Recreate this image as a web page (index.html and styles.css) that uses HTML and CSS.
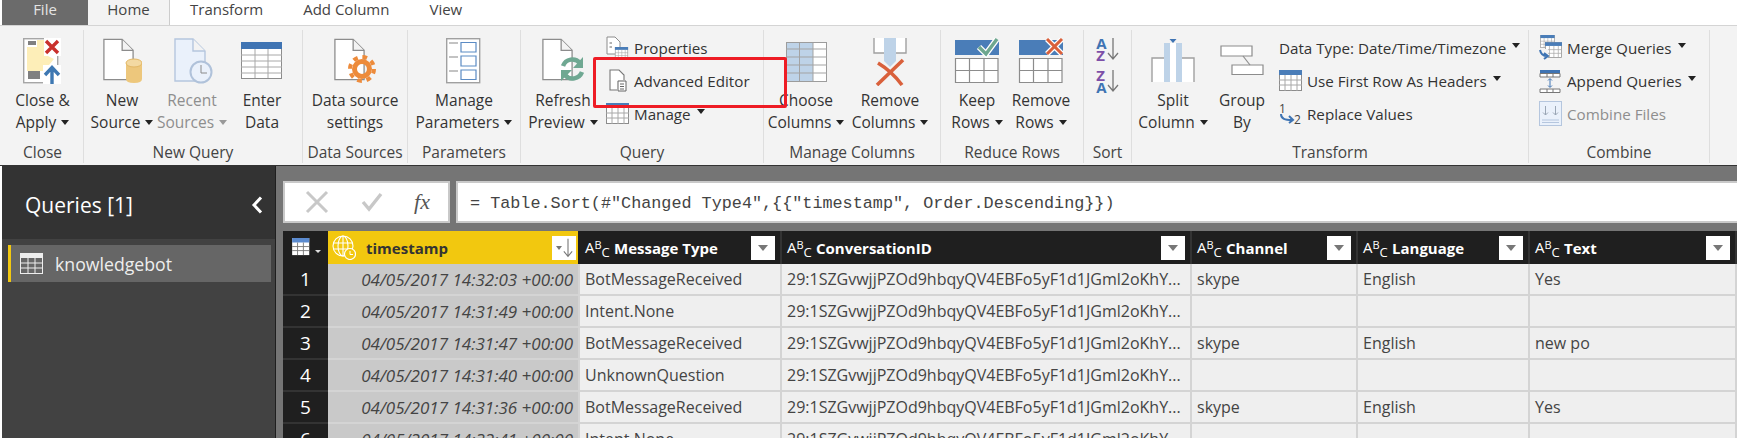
FILE: index.html
```html
<!DOCTYPE html>
<html>
<head>
  <title>Power Query Editor</title>
  <link rel="stylesheet" href="styles.css">
</head>
<body>

  <svg class="defs" width="0" height="0">
    <symbol id="page" viewBox="0 0 34 46">
      <path d="M1 1H21L33 13V45H1Z" fill="#fff" stroke="#8c8c8c" stroke-width="1.4"/>
      <path d="M21 1V13H33" fill="#f3f3f3" stroke="#8c8c8c" stroke-width="1.4"/>
    </symbol>
    <symbol id="minitable" viewBox="0 0 23 21">
      <rect x=".5" y=".5" width="22" height="20" fill="#fff" stroke="#8c8c8c"/>
      <rect x="0" y="0" width="23" height="5" fill="#4a7db8"/>
      <path d="M0 10H23M0 15H23M6 5V21M12 5V21M18 5V21" stroke="#a8a8a8"/>
    </symbol>
    <symbol id="downarrow" viewBox="0 0 12 24">
      <path d="M6 1V22M1 16L6 22L11 16" fill="none" stroke="#777" stroke-width="1.300"/>
    </symbol>
  </svg>

  <div class="tabs">
    <div class="tab file">File</div>
    <div class="tab home">Home</div>
    <div class="tab">Transform</div>
    <div class="tab">Add Column</div>
    <div class="tab">View</div>
  </div>

  <div class="ribbon">
    <div class="group w-close">
      <div class="group-body center">
        <div class="big">
          <svg class="big-icon" width="38" height="46" viewBox="0 0 38 46">
            <rect x=".7" y=".7" width="34" height="44" fill="#fff" stroke="#a6a6a6" stroke-width="1.4"/>
            <path d="M4 9H14V2H21V16L31 21L21 33H4Z" fill="#fdeeb8"/>
            <rect x="5" y="3" width="8" height="4" fill="#808080"/>
            <rect x="5" y="33" width="12" height="8" fill="#808080"/>
            <rect x="21" y="0" width="17" height="18" fill="#fff"/>
            <path d="M23 3L35 15M35 3L23 15" stroke="#c9302c" stroke-width="3.4"/>
            <rect x="20" y="27" width="18" height="19" fill="#fff"/>
            <path d="M29 46V30M22 37L29 29.500L36 37" fill="none" stroke="#3e78b2" stroke-width="3.4"/>
          </svg>
          <div class="big-label">Close &amp;<br>Apply<i class="caret"></i></div>
        </div>
      </div>
      <div class="group-label">Close</div>
    </div>

    <div class="group w-newquery">
      <div class="group-body pad-newquery">
        <div class="big w70">
          <svg class="big-icon" width="40" height="46" viewBox="0 0 40 46">
            <use href="#page" x="1" y="0" width="31" height="43"/>
            <path d="M24 25V41Q24 45 32 45T40 41V25Z" fill="#edc77c"/>
            <ellipse cx="32" cy="25" rx="8" ry="4" fill="#f3d9a2" stroke="#e2b765"/>
          </svg>
          <div class="big-label">New<br>Source<i class="caret"></i></div>
        </div>
        <div class="big w70 off">
          <svg class="big-icon" width="42" height="46" viewBox="0 0 42 46">
            <path d="M4 1H22L34 13V43H4Z" fill="#eaf1fb" stroke="#b5c6de" stroke-width="1.4"/>
            <path d="M22 1V13H34" fill="#f3f3f3" stroke="#b5c6de" stroke-width="1.4"/>
            <circle cx="30" cy="34" r="10.500" fill="#eaf1fb" stroke="#b0c2da" stroke-width="2"/>
            <path d="M30 27V35H36" fill="none" stroke="#8a8a8a"/>
          </svg>
          <div class="big-label">Recent<br>Sources<i class="caret"></i></div>
        </div>
        <div class="big w70">
          <svg class="big-icon" width="42" height="46" viewBox="0 0 42 46">
            <rect x=".5" y="4.500" width="40" height="36" fill="#fff" stroke="#8c8c8c"/>
            <rect x="0" y="4" width="41" height="7" fill="#3f74b3"/>
            <path d="M0 17H41M0 23H41M0 29H41M0 35H41M14 11V40M27 11V40" stroke="#a8a8a8"/>
          </svg>
          <div class="big-label">Enter<br>Data</div>
        </div>
      </div>
      <div class="group-label">New Query</div>
    </div>

    <div class="group w-sources">
      <div class="group-body center">
        <div class="big">
          <svg class="big-icon" width="42" height="46" viewBox="0 0 42 46">
            <use href="#page" x="0" y="0" width="31" height="43"/>
            <circle cx="28" cy="31" r="12" fill="none" stroke="#ed8b3b" stroke-width="4" stroke-dasharray="4.700 4.730"/>
            <circle cx="28" cy="31" r="7.500" fill="none" stroke="#ed8b3b" stroke-width="5"/>
          </svg>
          <div class="big-label">Data source<br>settings</div>
        </div>
      </div>
      <div class="group-label">Data Sources</div>
    </div>

    <div class="group w-params">
      <div class="group-body center">
        <div class="big">
          <svg class="big-icon" width="35" height="46" viewBox="0 0 35 46">
            <rect x=".7" y=".7" width="33" height="44" fill="#fff" stroke="#a0a0a0" stroke-width="1.400"/>
            <path d="M3 5H12M3 19H12M3 33H12" stroke="#b0b0b0" stroke-width="1.400"/>
            <path d="M15 4.500H30V14H15ZM15 18H30V28H15ZM15 32H30V41.500H15Z" fill="#fff" stroke="#5b8bc4" stroke-width="1.200"/>
          </svg>
          <div class="big-label">Manage<br>Parameters<i class="caret"></i></div>
        </div>
      </div>
      <div class="group-label">Parameters</div>
    </div>

    <div class="group w-query">
      <div class="group-body">
        <div class="big w84">
          <svg class="big-icon" width="42" height="46" viewBox="0 0 42 46">
            <use href="#page" x="0" y="0" width="31" height="43"/>
            <path d="M21 28A10 10 0 0 1 38 25" fill="none" stroke="#6fa892" stroke-width="4.500"/>
            <path d="M41 19V30H31Z" fill="#6fa892"/>
            <path d="M40 34A10 10 0 0 1 23 37" fill="none" stroke="#6fa892" stroke-width="4.500"/>
            <path d="M19 43V32H30Z" fill="#6fa892"/>
          </svg>
          <div class="big-label">Refresh<br>Preview<i class="caret"></i></div>
        </div>
        <div class="smalls pad-query">
          <div class="small">
            <svg class="small-icon" width="23" height="23" viewBox="0 0 23 23">
              <path d="M1 1H9L14 6V18H1Z" fill="#fff" stroke="#8c8c8c"/>
              <path d="M3.500 7H6M3.500 11H6" stroke="#666"/>
              <use href="#minitable" x="8" y="11" width="15" height="12"/>
            </svg>
            <span>Properties</span>
          </div>
          <div class="small">
            <svg class="small-icon" width="23" height="23" viewBox="0 0 23 23">
              <path d="M4 1H13L18 6V21H4Z" fill="#fff" stroke="#777" stroke-width="1.100"/>
              <rect x="11" y="11" width="10" height="11" fill="#f3f3f3"/>
              <path d="M12 12H20V22H12ZM14 15H18M14 17.500H18M14 20H18" fill="#fff" stroke="#666"/>
            </svg>
            <span>Advanced Editor</span>
          </div>
          <div class="small">
            <svg class="small-icon" width="23" height="21" viewBox="0 0 23 21"><use href="#minitable"/></svg>
            <span>Manage</span><i class="caret"></i>
          </div>
        </div>
      </div>
      <div class="group-label">Query</div>
    </div>

    <div class="group w-columns">
      <div class="group-body">
        <div class="big w84">
          <svg class="big-icon" width="41" height="46" viewBox="0 0 41 46">
            <rect x=".5" y="4.500" width="40" height="39" fill="#fff" stroke="#9c9c9c"/>
            <rect x="1" y="5" width="26" height="38" fill="#bed3e8"/>
            <path d="M0 11H41M0 19H41M0 27H41M0 35H41M13.500 5V43M27 5V43" stroke="#a3a3a3"/>
          </svg>
          <div class="big-label">Choose<br>Columns<i class="caret"></i></div>
        </div>
        <div class="big w84">
          <svg class="big-icon" width="34" height="48" viewBox="0 0 34 48">
            <path d="M1 0V15H11V0ZM23 0V15H33V0Z" fill="#fff"/>
            <path d="M1 0V15H11M23 15H33V0" fill="none" stroke="#a0a0a0" stroke-width="1.400"/>
            <path d="M11 0H23V23L17 29L11 23Z" fill="#bed3e8"/>
            <path d="M4 47L30 22M5 25C15 31 23 39 29 47" fill="none" stroke="#d9603b" stroke-width="3.600"/>
          </svg>
          <div class="big-label">Remove<br>Columns<i class="caret"></i></div>
        </div>
      </div>
      <div class="group-label">Manage Columns</div>
    </div>

    <div class="group w-rows">
      <div class="group-body pad-rows">
        <div class="big w64">
          <svg class="big-icon" width="46" height="46" viewBox="0 0 46 46">
            <rect x="1" y="2" width="44" height="15" fill="#4a7db8"/>
            <path d="M25 9L32 16L43 1" fill="none" stroke="#fff" stroke-width="6"/>
            <path d="M25 9L32 16L43 1" fill="none" stroke="#6ea78f" stroke-width="3.400"/>
            <path d="M1.500 20.500H44V44.500H1.500ZM1.500 32.500H44M15.500 20.500V44.500M30 20.500V44.500" fill="#fff" stroke="#8c8c8c" stroke-width="1.200"/>
          </svg>
          <div class="big-label">Keep<br>Rows<i class="caret"></i></div>
        </div>
        <div class="big w64">
          <svg class="big-icon" width="46" height="46" viewBox="0 0 46 46">
            <rect x="1" y="2" width="44" height="15" fill="#4a7db8"/>
            <path d="M29 1L44 16M44 1L29 16" stroke="#fff" stroke-width="5.500"/>
            <path d="M29 1L44 16M44 1L29 16" stroke="#d9603b" stroke-width="3"/>
            <path d="M1.500 20.500H44V44.500H1.500ZM1.500 32.500H44M15.500 20.500V44.500M30 20.500V44.500" fill="#fff" stroke="#8c8c8c" stroke-width="1.200"/>
          </svg>
          <div class="big-label">Remove<br>Rows<i class="caret"></i></div>
        </div>
      </div>
      <div class="group-label">Reduce Rows</div>
    </div>

    <div class="group w-sort">
      <div class="group-body center">
        <div class="sort-icons">
          <div class="sort-btn"><span class="sort-letters"><b class="sort-blue">A</b><b class="sort-purple">Z</b></span><svg width="12" height="24"><use href="#downarrow"/></svg></div>
          <div class="sort-btn"><span class="sort-letters"><b class="sort-purple">Z</b><b class="sort-blue">A</b></span><svg width="12" height="24"><use href="#downarrow"/></svg></div>
        </div>
      </div>
      <div class="group-label">Sort</div>
    </div>

    <div class="group w-transform">
      <div class="group-body">
        <div class="big w82">
          <svg class="big-icon" width="44" height="46" viewBox="0 0 44 46">
            <path d="M1 44V20H13V5H31V20H43V44Z" fill="#fff"/>
            <path d="M1 44V20H13M31 20H43V44" fill="none" stroke="#a0a0a0" stroke-width="1.400"/>
            <path d="M13 5H31V44H13Z" fill="#fff"/>
            <path d="M13 5H19V44H13ZM25 5H31V44H25Z" fill="#bed3e8"/>
            <path d="M18.500 1H25.500L22 5Z" fill="#3f74b3"/>
          </svg>
          <div class="big-label">Split<br>Column<i class="caret"></i></div>
        </div>
        <div class="big w56">
          <svg class="big-icon" width="44" height="38" viewBox="0 1.500 44 38">
            <path d="M1 9.500H32V19.500H1ZM12 28.500H43V38H12Z" fill="#fff" stroke="#8c8c8c" stroke-width="1.200"/>
            <path d="M23 19.500L30 28.500" stroke="#8c8c8c" stroke-width="1.200"/>
          </svg>
          <div class="big-label">Group<br>By</div>
        </div>
        <div class="smalls pad-transform">
          <div class="small">
            <span>Data Type: Date/Time/Timezone</span><i class="caret"></i>
          </div>
          <div class="small">
            <svg class="small-icon" width="23" height="23" viewBox="0 0 23 21"><use href="#minitable"/></svg>
            <span>Use First Row As Headers</span><i class="caret"></i>
          </div>
          <div class="small">
            <span class="replace-icon"><span class="replace-one">1</span><svg width="15" height="10" viewBox="0 0 15 10"><path d="M1 0C1 5 5 6 12 6M9 2L13 6L9 9" fill="none" stroke="#3f74b3" stroke-width="2"/></svg><span class="replace-two">2</span></span>
            <span>Replace Values</span>
          </div>
        </div>
      </div>
      <div class="group-label">Transform</div>
    </div>

    <div class="group w-combine">
      <div class="group-body">
        <div class="smalls pad-combine">
          <div class="small">
            <svg class="small-icon" width="23" height="25" viewBox="0 0 23 25">
              <use href="#minitable" x="1" y="0" width="15" height="13"/>
              <use href="#minitable" x="6" y="7" width="17" height="16"/>
              <rect x="0" y="14" width="9" height="11" fill="#f3f3f3"/>
              <path d="M1 15C2 20 5 21 8 21M5 18L9 21L5 24" fill="none" stroke="#3f74b3" stroke-width="2"/>
            </svg>
            <span>Merge Queries</span><i class="caret"></i>
          </div>
          <div class="small">
            <svg class="small-icon" width="23" height="24" viewBox="0 0 23 24">
              <rect x="1" y="1" width="20" height="3" fill="#3f74b3"/>
              <path d="M1 4.500H21V8H1ZM1 20H21V23.500H1ZM8 4.500V8M14 4.500V8M8 20V23.500M14 20V23.500" fill="#fff" stroke="#777"/>
              <path d="M11 10V18M9 11.500L11 9.500L13 11.500M9 16.500L11 18.500L13 16.500" fill="none" stroke="#3f74b3"/>
            </svg>
            <span>Append Queries</span><i class="caret"></i>
          </div>
          <div class="small off">
            <svg class="small-icon" width="23" height="25" viewBox="0 0 23 25">
              <rect x=".5" y=".5" width="22" height="24" fill="#eaf1fb" stroke="#b5c6de"/>
              <path d="M6.500 5V14M4 11.500L6.500 14L9 11.500M16.500 5V14M14 11.500L16.500 14L19 11.500" fill="none" stroke="#9aa6b5"/>
              <path d="M3 19H20M3 21.500H20" stroke="#b5c6de"/>
            </svg>
            <span>Combine Files</span>
          </div>
        </div>
      </div>
      <div class="group-label">Combine</div>
    </div>

    <div class="highlight"></div>
  </div>

  <div class="workspace">
    <div class="sidebar">
      <div class="sidebar-head">
        <span>Queries [1]</span>
        <svg width="12" height="18" viewBox="0 0 12 18"><path d="M10 1.500L3 9L10 16.500" fill="none" stroke="#fff" stroke-width="3"/></svg>
      </div>
      <div class="query-list">
        <div class="query-item">
          <svg width="23" height="21" viewBox="0 0 23 21">
            <rect x=".5" y=".5" width="22" height="20" fill="#666" stroke="#eee"/>
            <rect x="0" y="0" width="23" height="5" fill="#eee"/>
            <path d="M0 10H23M0 15H23M8 5V21M15 5V21" stroke="#eee"/>
          </svg>
          <span>knowledgebot</span>
        </div>
      </div>
    </div>

    <div class="main">
      <div class="formula-row">
        <div class="fx-box">
          <svg width="24" height="24" viewBox="0 0 24 24"><path d="M2 2L22 22M22 2L2 22" stroke="#c8c8c8" stroke-width="3"/></svg>
          <svg width="24" height="20" viewBox="0 0 24 20"><path d="M3 10L9 17L21 2" fill="none" stroke="#c8c8c8" stroke-width="3.400"/></svg>
          <span class="fx">fx</span>
        </div>
        <div class="formula">= Table.Sort(#"Changed Type4",{{"timestamp", Order.Descending}})</div>
      </div>

      <div class="grid">
        <div class="cell corner">
          <svg width="21" height="18" viewBox="0 0 23 20">
            <rect x="0" y="0" width="19" height="19" fill="#fff"/>
            <rect x="0" y="0" width="19" height="5" fill="#5b8bd0"/>
            <path d="M0 9.500H19M0 14H19M6 5V19M12.500 5V19" stroke="#777"/>
          </svg>
          <i class="corner-caret"></i>
        </div>
        <div class="cell head head-active">
          <svg class="globe" width="24" height="25" viewBox="0 0 24 25">
            <g fill="none" stroke="#fff" stroke-width="1.100">
              <circle cx="11" cy="11" r="10"/>
              <ellipse cx="11" cy="11" rx="5" ry="10"/>
              <path d="M11 1V21M1.500 8H20.500M1.500 14H20.500"/>
            </g>
            <circle cx="18" cy="19" r="5.500" fill="#f2c80f" stroke="#fff" stroke-width="1.200"/>
            <path d="M18 16V19.500H21" fill="none" stroke="#fff"/>
          </svg>
          <span class="head-name">timestamp</span>
          <span class="filter"><i class="filter-tri small-tri"></i><svg width="10" height="20"><use href="#downarrow"/></svg></span>
        </div>
        <div class="cell head"><span class="abc">A<sup>B</sup><sub>C</sub></span><span class="head-name">Message Type</span><span class="filter"><i class="filter-tri"></i></span></div>
        <div class="cell head"><span class="abc">A<sup>B</sup><sub>C</sub></span><span class="head-name">ConversationID</span><span class="filter"><i class="filter-tri"></i></span></div>
        <div class="cell head"><span class="abc">A<sup>B</sup><sub>C</sub></span><span class="head-name">Channel</span><span class="filter"><i class="filter-tri"></i></span></div>
        <div class="cell head"><span class="abc">A<sup>B</sup><sub>C</sub></span><span class="head-name">Language</span><span class="filter"><i class="filter-tri"></i></span></div>
        <div class="cell head"><span class="abc">A<sup>B</sup><sub>C</sub></span><span class="head-name">Text</span><span class="filter"><i class="filter-tri"></i></span></div>

        <div class="cell num">1</div>
        <div class="cell stamp">04/05/2017 14:32:03 +00:00</div>
        <div class="cell">BotMessageReceived</div>
        <div class="cell">29:1SZGvwjjPZOd9hbqyQV4EBFo5yF1d1JGml2oKhY...</div>
        <div class="cell">skype</div>
        <div class="cell">English</div>
        <div class="cell">Yes</div>

        <div class="cell num">2</div>
        <div class="cell stamp">04/05/2017 14:31:49 +00:00</div>
        <div class="cell">Intent.None</div>
        <div class="cell">29:1SZGvwjjPZOd9hbqyQV4EBFo5yF1d1JGml2oKhY...</div>
        <div class="cell"></div>
        <div class="cell"></div>
        <div class="cell"></div>

        <div class="cell num">3</div>
        <div class="cell stamp">04/05/2017 14:31:47 +00:00</div>
        <div class="cell">BotMessageReceived</div>
        <div class="cell">29:1SZGvwjjPZOd9hbqyQV4EBFo5yF1d1JGml2oKhY...</div>
        <div class="cell">skype</div>
        <div class="cell">English</div>
        <div class="cell">new po</div>

        <div class="cell num">4</div>
        <div class="cell stamp">04/05/2017 14:31:40 +00:00</div>
        <div class="cell">UnknownQuestion</div>
        <div class="cell">29:1SZGvwjjPZOd9hbqyQV4EBFo5yF1d1JGml2oKhY...</div>
        <div class="cell"></div>
        <div class="cell"></div>
        <div class="cell"></div>

        <div class="cell num">5</div>
        <div class="cell stamp">04/05/2017 14:31:36 +00:00</div>
        <div class="cell">BotMessageReceived</div>
        <div class="cell">29:1SZGvwjjPZOd9hbqyQV4EBFo5yF1d1JGml2oKhY...</div>
        <div class="cell">skype</div>
        <div class="cell">English</div>
        <div class="cell">Yes</div>

        <div class="cell num">6</div>
        <div class="cell stamp">04/05/2017 14:32:41 +00:00</div>
        <div class="cell">Intent.None</div>
        <div class="cell">29:1SZGvwjjPZOd9hbqyQV4EBFo5yF1d1JGml2oKhY...</div>
        <div class="cell"></div>
        <div class="cell"></div>
        <div class="cell"></div>
      </div>
    </div>
  </div>

</body>
</html>
```

FILE: styles.css
```css
html, body {
  margin: 0;
  height: 438px;
  overflow: hidden;
}

body {
  font-family: "Open Sans", "Noto Sans", sans-serif;
  font-size: 15.5px;
  color: #333;
  background-color: #fff;
}

.defs {
  position: absolute;
}

/* tabs */
.tabs {
  display: flex;
  height: 25px;
  padding-left: 2px;
  line-height: 19px;
  font-size: 15px;
  color: #444;
}

.tab {
  padding: 0 20px;
}

.tab.file {
  width: 86px;
  box-sizing: border-box;
  padding: 0;
  text-align: center;
  background-color: #6b6b6b;
  color: #e4e4e4;
}

.tab.home {
  width: 82px;
  box-sizing: border-box;
  padding: 0;
  text-align: center;
  background-color: #f3f3f3;
  border-right: 1px solid #ccc;
  height: 26px;
}

/* ribbon */
.ribbon {
  position: relative;
  display: flex;
  height: 140px;
  box-sizing: border-box;
  padding: 4px 0 0 2px;
  background-color: #f3f3f3;
  border-top: 1px solid #d4d4d4;
}

.group {
  box-sizing: border-box;
  height: 133px;
  padding-top: 2px;
  border-right: 1px solid #dedede;
  display: flex;
  flex-direction: column;
}

.w-close { width: 82px; }
.w-newquery { width: 219px; }
.w-sources { width: 105px; }
.w-params { width: 113px; }
.w-query { width: 243px; }
.w-columns { width: 177px; }
.w-rows { width: 143px; }
.w-sort { width: 48px; }
.w-transform { width: 397px; }
.w-combine { width: 181px; }

.group-body {
  display: flex;
  height: 109px;
}

.group-body.center {
  justify-content: center;
}

.pad-newquery { padding-left: 3px; }
.pad-rows { padding-left: 4px; }

.group-label {
  height: 22px;
  line-height: 22px;
  text-align: center;
  color: #444;
}

.big {
  display: flex;
  flex-direction: column;
  align-items: center;
  flex-shrink: 0;
}

.w56 { width: 56px; }
.w64 { width: 64px; }
.w70 { width: 70px; }
.w82 { width: 82px; }
.w84 { width: 84px; }

.big-icon {
  display: block;
  margin: 6px 0 auto;
}

.big-label {
  height: 44px;
  margin-bottom: 8px;
  line-height: 22px;
  text-align: center;
  white-space: nowrap;
}

.off {
  color: #8e8e8e;
}

.caret {
  display: inline-block;
  margin-left: 5px;
  vertical-align: 3px;
  border-left: 4px solid transparent;
  border-right: 4px solid transparent;
  border-top: 5px solid #222;
}

.off .caret {
  border-top-color: #999;
}

.smalls {
  display: flex;
  flex-direction: column;
  margin-top: -1px;
  font-size: 15.2px;
}

.pad-query { padding-left: 1px; }
.pad-transform { padding-left: 9px; }
.pad-combine { padding-left: 10px; }

.small {
  display: flex;
  align-items: center;
  height: 33px;
  white-space: nowrap;
}

.small .caret {
  margin-left: 6px;
  margin-top: -4px;
  vertical-align: 0;
}

.small-icon {
  width: 23px;
  margin-right: 5px;
  flex-shrink: 0;
}

.replace-icon {
  display: flex;
  align-items: flex-end;
  width: 28px;
  height: 24px;
  font-size: 12px;
  line-height: 12px;
  color: #444;
}

.replace-one {
  margin-bottom: 11px;
  width: 0;
}

.replace-icon svg {
  margin: 0 0 2px 1px;
}

.replace-two {
  margin-left: -1px;
}

.sort-icons {
  display: flex;
  flex-direction: column;
  gap: 8px;
  margin-top: 5px;
}

.sort-btn {
  display: flex;
  align-items: center;
  height: 24px;
}

.sort-letters {
  display: flex;
  flex-direction: column;
  line-height: 12.5px;
  font-size: 15px;
}

.sort-blue { color: #3f74b3; }
.sort-purple { color: #7d4fa8; }

.highlight {
  position: absolute;
  left: 593px;
  top: 31px;
  width: 194px;
  height: 51px;
  box-sizing: border-box;
  border: 3px solid #ee1c25;
  border-radius: 2px;
}

/* bottom part */
.workspace {
  display: flex;
  height: 273px;
  padding-left: 2px;
  border-top: 1px solid #333;
  box-sizing: border-box;
}

.sidebar {
  width: 273px;
  flex-shrink: 0;
  background-color: #424242;
  border-right: 1px solid #1f1f1f;
}

.sidebar-head {
  display: flex;
  align-items: center;
  justify-content: space-between;
  box-sizing: border-box;
  height: 73px;
  padding: 5px 12px 0 23px;
  background-color: #333;
  color: #fff;
  font-size: 21px;
}

.query-list {
  padding: 6px 4px 0 6px;
}

.query-item {
  display: flex;
  align-items: center;
  gap: 12px;
  height: 37px;
  padding-left: 9px;
  border-left: 3px solid #f2c80f;
  background-color: #666;
  color: #eee;
  font-size: 17.7px;
}

.main {
  flex: 1;
  min-width: 0;
  background-color: #757575;
  padding: 15px 0 0 7px;
}

.formula-row {
  display: flex;
  gap: 6px;
  height: 42px;
  margin-bottom: 8px;
}

.fx-box {
  display: flex;
  align-items: center;
  justify-content: space-between;
  box-sizing: border-box;
  width: 167px;
  padding: 0 18px 0 20px;
  background-color: #fff;
  border: 2px solid #c9c9c9;
}

.fx {
  font-family: "Liberation Serif", serif;
  font-style: italic;
  font-size: 22px;
  color: #555;
}

.formula {
  flex: 1;
  box-sizing: border-box;
  padding-left: 12px;
  line-height: 42px;
  background-color: #fff;
  border: 2px solid #c9c9c9;
  border-right: none;
  font-family: "Liberation Mono", monospace;
  font-size: 16.8px;
  color: #444;
  white-space: nowrap;
}

.grid {
  display: grid;
  grid-template-columns: 45px 252px 202px 410px 166px 172px 1fr;
  grid-template-rows: 33px;
  grid-auto-rows: 32px;
  background-color: #1f1f1f;
}

.cell {
  box-sizing: border-box;
  display: flex;
  align-items: center;
  min-width: 0;
  padding: 0 5px;
  background-color: #efefef;
  border-right: 2px solid #d4d4d4;
  border-bottom: 2px solid #d4d4d4;
  color: #444;
  white-space: nowrap;
  font-size: 16px;
}

.corner {
  gap: 2px;
  padding-left: 9px;
  background-color: #1f1f1f;
  border-color: #1f1f1f;
}

.corner-caret {
  align-self: flex-end;
  margin-bottom: 9px;
  border-left: 3px solid transparent;
  border-right: 3px solid transparent;
  border-top: 3px solid #ddd;
}

.head {
  background-color: #1f1f1f;
  border: none;
  border-right: 2px solid #333;
  color: #fff;
  font-weight: 700;
  font-size: 15px;
}

.head-active {
  background-color: #f2c80f;
  border-right: 2px solid #1f1f1f;
  color: #333;
  padding-left: 4px;
  padding-right: 2px;
}

.globe {
  margin-right: 10px;
}

.abc {
  width: 24px;
  margin-right: 5px;
  flex-shrink: 0;
  font-weight: 400;
  font-size: 15px;
  line-height: 1;
}

.abc sup,
.abc sub {
  font-size: 11px;
  line-height: 0;
}

.abc sup { vertical-align: 4px; }
.abc sub { vertical-align: -4px; font-size: 13px; }

.head-name {
  flex: 1;
}

.filter {
  display: flex;
  align-items: center;
  justify-content: center;
  width: 24px;
  height: 24px;
  background-color: #fff;
  flex-shrink: 0;
}

.filter-tri {
  border-left: 5px solid transparent;
  border-right: 5px solid transparent;
  border-top: 6px solid #777;
}

.small-tri {
  border-left-width: 3px;
  border-right-width: 3px;
  border-top-width: 4px;
  margin-right: 1px;
}

.num {
  justify-content: center;
  background-color: #1f1f1f;
  border-right: none;
  border-bottom: 2px solid #333;
  color: #fff;
  font-size: 19px;
}

.stamp {
  justify-content: flex-end;
  background-color: #c9c9c9;
  font-style: italic;
  font-size: 17px;
}
```
